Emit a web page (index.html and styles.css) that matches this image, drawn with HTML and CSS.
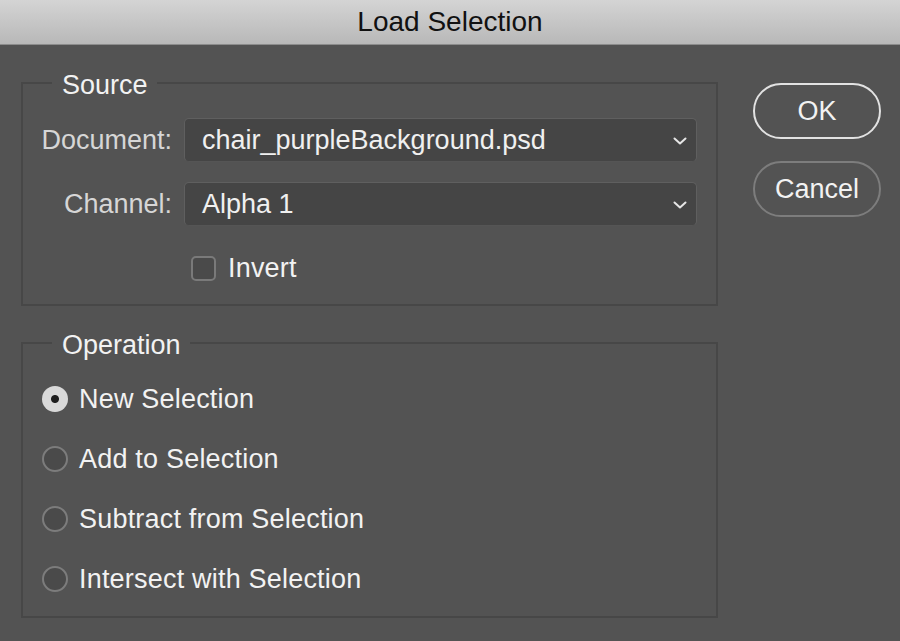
FILE: index.html
```html
<!DOCTYPE html>
<html>
<head>
<meta charset="utf-8">
<title>Load Selection</title>
<link rel="stylesheet" href="styles.css">
</head>
<body>
<div class="window">
  <div class="titlebar">Load Selection</div>
  <div class="main">
    <div class="groups">
      <fieldset class="group source">
        <legend>Source</legend>
        <div class="form">
          <label class="lbl">Document:</label>
          <div class="select"><span>chair_purpleBackground.psd</span>
            <svg class="chev" viewBox="0 0 14 8" width="14" height="8"><path d="M1.5 1.5 L7 6.5 L12.5 1.5" fill="none" stroke="#e6e6e6" stroke-width="2" stroke-linecap="round" stroke-linejoin="round"/></svg>
          </div>
          <label class="lbl">Channel:</label>
          <div class="select"><span>Alpha 1</span>
            <svg class="chev" viewBox="0 0 14 8" width="14" height="8"><path d="M1.5 1.5 L7 6.5 L12.5 1.5" fill="none" stroke="#e6e6e6" stroke-width="2" stroke-linecap="round" stroke-linejoin="round"/></svg>
          </div>
          <div class="check-row">
            <span class="checkbox"></span><span class="txt">Invert</span>
          </div>
        </div>
      </fieldset>
      <fieldset class="group operation">
        <legend>Operation</legend>
        <div class="radios">
          <div class="radio-row"><span class="radio on"></span><span class="txt">New Selection</span></div>
          <div class="radio-row"><span class="radio"></span><span class="txt">Add to Selection</span></div>
          <div class="radio-row"><span class="radio"></span><span class="txt">Subtract from Selection</span></div>
          <div class="radio-row"><span class="radio"></span><span class="txt">Intersect with Selection</span></div>
        </div>
      </fieldset>
    </div>
    <div class="buttons">
      <button class="btn ok">OK</button>
      <button class="btn cancel">Cancel</button>
    </div>
  </div>
</div>
</body>
</html>
```

FILE: styles.css
```css
* { box-sizing: border-box; }
html, body {
  margin: 0;
  padding: 0;
  width: 900px;
  height: 641px;
  overflow: hidden;
  background: #535353;
  font-family: "Liberation Sans", Arial, sans-serif;
}
.window {
  width: 900px;
  height: 641px;
  display: flex;
  flex-direction: column;
  background: #535353;
}
.titlebar {
  height: 45px;
  flex: none;
  background: linear-gradient(#d4d4d4, #b8b8b8);
  border-bottom: 1px solid #8c8c8c;
  color: #111;
  font-size: 28px;
  line-height: 44px;
  text-align: center;
}
.main {
  display: flex;
  padding: 23px 0 0 21px;
}
.groups {
  width: 697px;
  display: flex;
  flex-direction: column;
  gap: 22px;
}
.group {
  margin: 0;
  padding: 0 19px 0 0;
  border: 2px solid #474747;
  min-width: 0;
}
.group legend {
  margin-left: 29px;
  padding: 4px 9px 0 10px;
  color: #f2f2f2;
  font-size: 27px;
  line-height: 26px;
  height: 30px;
}
.form {
  display: grid;
  grid-template-columns: 149px 513px;
  column-gap: 12px;
  row-gap: 20px;
  padding-top: 20px;
  padding-bottom: 20px;
  align-items: center;
}
.lbl {
  text-align: right;
  color: #d6d6d6;
  font-size: 27px;
}
.select {
  height: 44px;
  background: #454545;
  border: 1px solid #5f5f5f;
  border-bottom-color: #555;
  border-radius: 5px;
  display: flex;
  align-items: center;
  justify-content: space-between;
  padding: 0 9px 0 17px;
  color: #f0f0f0;
  font-size: 27px;
}
.chev { flex: none; margin-top: 2px; }
.check-row {
  grid-column: 2;
  display: flex;
  align-items: center;
  gap: 12px;
  margin-top: 7px;
  padding-left: 7px;
}
.checkbox {
  width: 25px;
  height: 25px;
  border: 2px solid #7a7a7a;
  border-radius: 5px;
  background: #4a4a4a;
}
.txt {
  color: #f2f2f2;
  font-size: 27px;
  letter-spacing: 0.2px;
}
.radios {
  display: flex;
  flex-direction: column;
  gap: 34px;
  padding: 28px 0 24px 19px;
}
.radio-row {
  display: flex;
  align-items: center;
  gap: 11px;
  height: 26px;
}
.radio {
  width: 26px;
  height: 26px;
  border-radius: 50%;
  border: 2px solid #7c7c7c;
  background: #4a4a4a;
  flex: none;
}
.radio.on {
  border: none;
  background: radial-gradient(circle, #1e1e1e 0 3.5px, #d9d9d9 4.5px);
}
.buttons {
  margin-left: 35px;
  margin-top: 15px;
  display: flex;
  flex-direction: column;
  gap: 22px;
}
.btn {
  width: 128px;
  height: 56px;
  border-radius: 28px;
  background: #535353;
  color: #f2f2f2;
  font-family: "Liberation Sans", Arial, sans-serif;
  font-size: 27px;
  padding: 0;
}
.btn.ok { border: 2px solid #e2e2e2; }
.btn.cancel { border: 2px solid #7d7d7d; }
```
